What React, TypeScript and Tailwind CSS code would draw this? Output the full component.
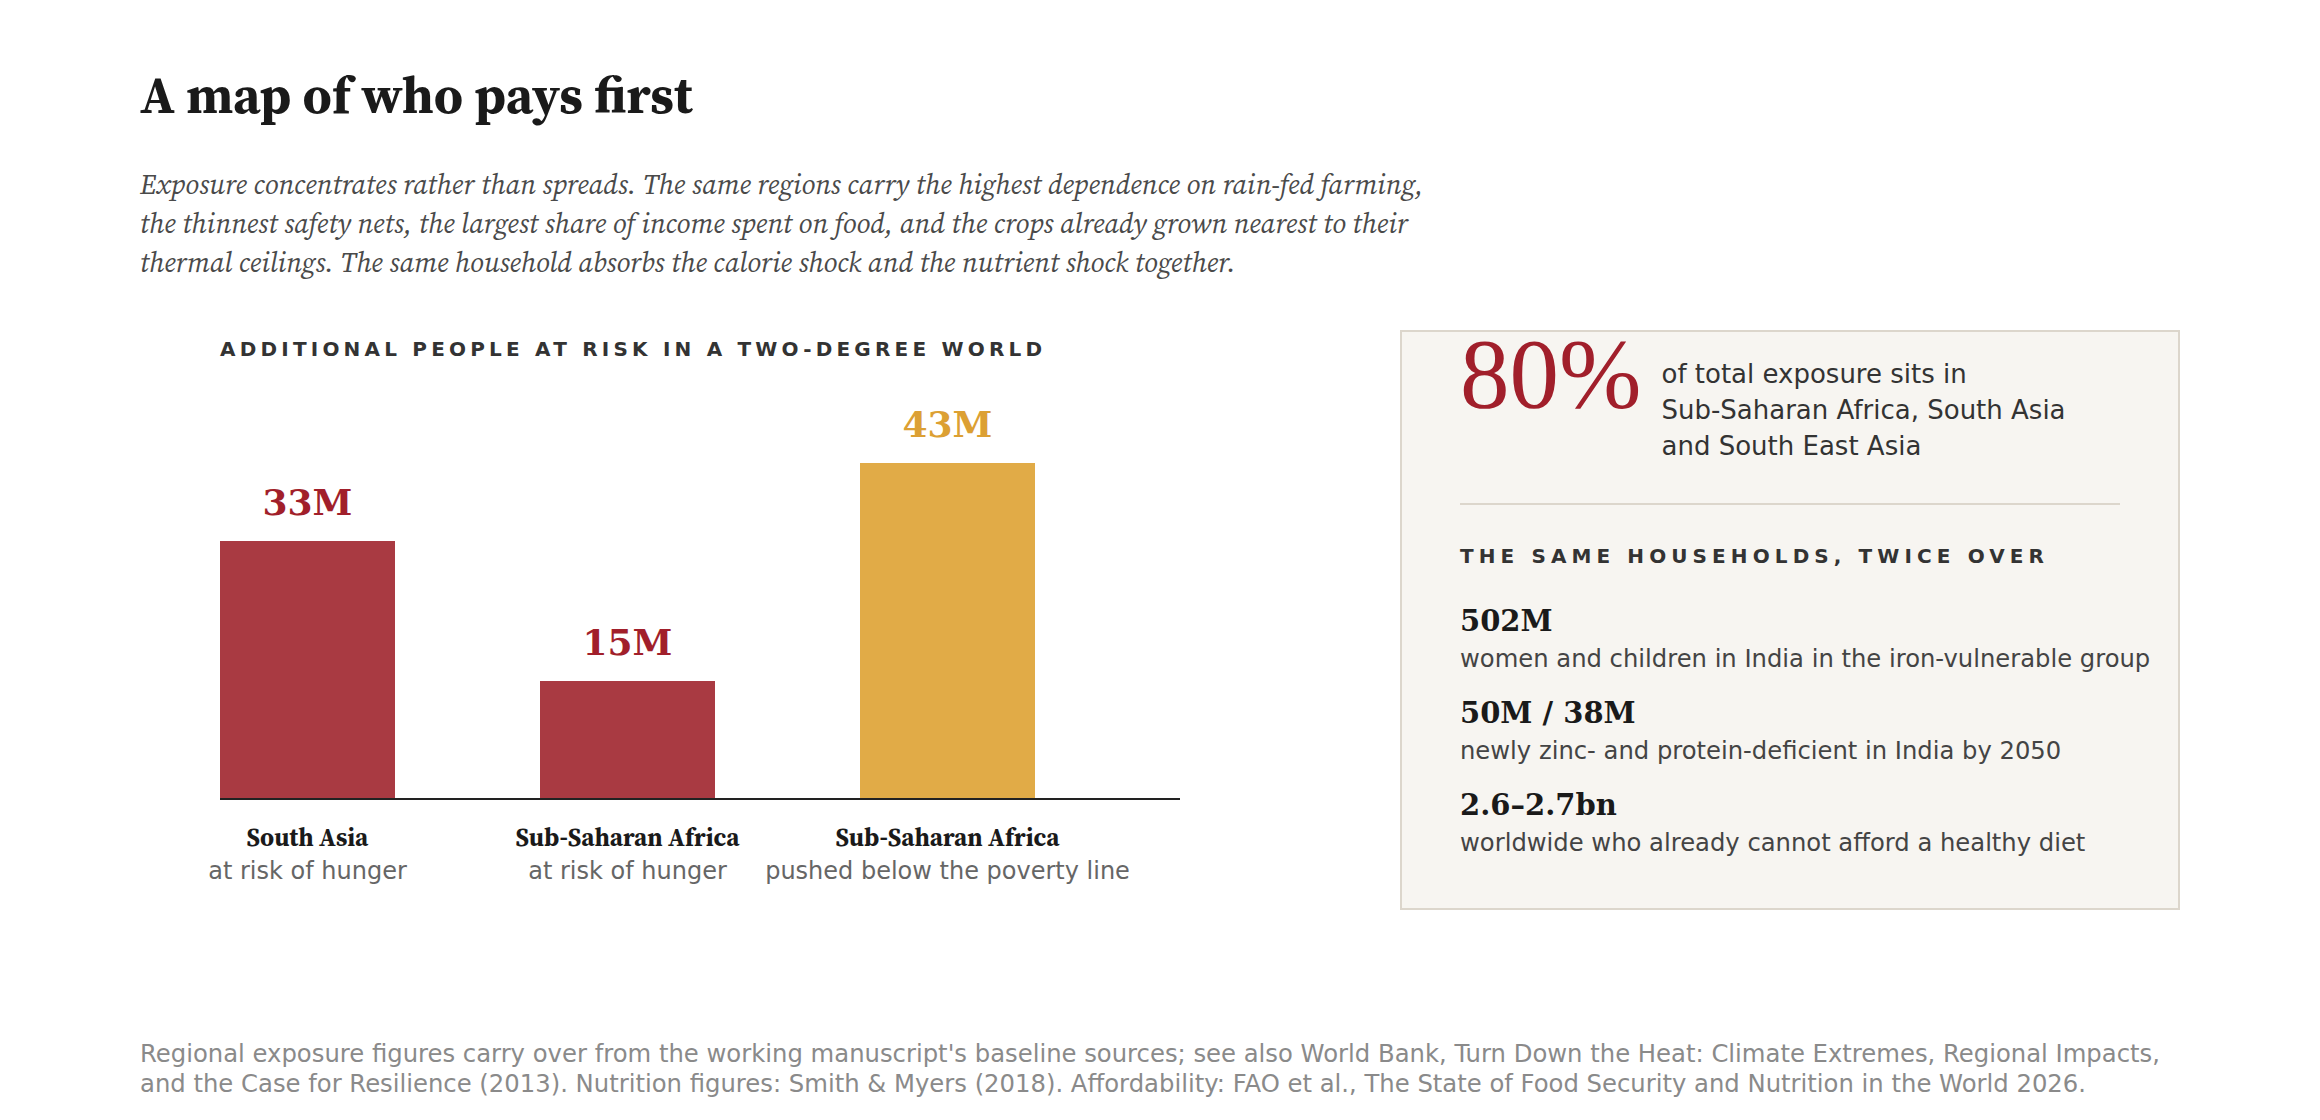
import React from "react";

const bars = [
  { value: "33M", h: 257, bar: "bg-[#a93a42]", text: "text-[#a11f2b]", name: "South Asia", sub: "at risk of hunger" },
  { value: "15M", h: 117, bar: "bg-[#a93a42]", text: "text-[#a11f2b]", name: "Sub-Saharan Africa", sub: "at risk of hunger" },
  { value: "43M", h: 335, bar: "bg-[#e1ab47]", text: "text-[#dca033]", name: "Sub-Saharan Africa", sub: "pushed below the poverty line" },
];

const stats = [
  { n: "502M", d: "women and children in India in the iron-vulnerable group" },
  { n: "50M / 38M", d: "newly zinc- and protein-deficient in India by 2050" },
  { n: "2.6–2.7bn", d: "worldwide who already cannot afford a healthy diet" },
];

export default function App() {
  return (
    <div className="w-[2320px] h-[1120px] bg-white px-[140px] pt-[65px] font-['DejaVu_Sans',sans-serif]">
      <h1 className="font-['Source_Serif_4',serif] text-[52px] leading-[60px] font-bold text-[#1a1a1a]">
        A map of who pays first
      </h1>
      <p className="font-['Source_Serif_4',serif] italic text-[28px] leading-[39px] text-[#4a4a4a] mt-[40px] max-w-[1300px]">
        Exposure concentrates rather than spreads. The same regions carry the highest dependence on rain-fed farming,
        the thinnest safety nets, the largest share of income spent on food, and the crops already grown nearest to
        their thermal ceilings. The same household absorbs the calorie shock and the nutrient shock together.
      </p>

      <div className="flex justify-between items-start mt-[48px]">
        {/* Chart */}
        <div className="w-[1040px] pl-[80px] pt-[8px]">
          <div className="text-[20px] leading-[22px] font-bold tracking-[0.21em] text-[#333]">
            ADDITIONAL PEOPLE AT RISK IN A TWO-DEGREE WORLD
          </div>
          <div className="w-[960px] h-[440px] border-b-2 border-[#222] flex items-end gap-[145px]">
            {bars.map((b, i) => (
              <div key={i} className="w-[175px] flex flex-col items-center">
                <div className={`font-['DejaVu_Serif',serif] font-bold text-[36px] leading-[46px] mb-[16px] ${b.text}`}>
                  {b.value}
                </div>
                <div className={`w-[175px] ${b.bar}`} style={{ height: b.h }} />
              </div>
            ))}
          </div>
          <div className="flex gap-[145px] mt-[21px]">
            {bars.map((b, i) => (
              <div key={i} className="w-[175px] flex flex-col items-center whitespace-nowrap">
                <div className="font-['Source_Serif_4',serif] font-bold text-[25px] leading-[32px] text-[#1a1a1a]">
                  {b.name}
                </div>
                <div className="text-[24px] leading-[32px] text-[#666] mt-[2px]">{b.sub}</div>
              </div>
            ))}
          </div>
        </div>

        {/* Side box */}
        <div className="w-[780px] h-[580px] border-2 border-[#dcd6cc] bg-[#f7f5f1] pl-[58px] pr-[28px] pt-[2px]">
          <div className="flex items-start gap-[20px]">
            <div className="font-['Liberation_Serif',serif] text-[99px] leading-[0.8] text-[#a11f2b]">80%</div>
            <div className="text-[26px] leading-[36px] text-[#333] mt-[22px] w-[440px]">
              of total exposure sits in
              <br />
              Sub-Saharan Africa, South Asia
              <br />
              and South East Asia
            </div>
          </div>
          <div className="h-[2px] w-[660px] bg-[#dcd6cc] mt-[39px]" />
          <div className="mt-[40px] text-[20px] leading-[22px] font-bold tracking-[0.255em] text-[#333]">
            THE SAME HOUSEHOLDS, TWICE OVER
          </div>
          <div className="flex flex-col gap-[20px] mt-[36px]">
            {stats.map((s) => (
              <div key={s.n}>
                <div className="font-['DejaVu_Serif',serif] font-bold text-[29px] leading-[36px] text-[#1a1a1a]">{s.n}</div>
                <div className="text-[24.25px] leading-[32px] text-[#444] mt-[4px] whitespace-nowrap">{s.d}</div>
              </div>
            ))}
          </div>
        </div>
      </div>

      <p className="mt-[129px] text-[24.3px] leading-[30px] text-[#8a8a8a]">
        Regional exposure figures carry over from the working manuscript's baseline sources; see also World Bank, Turn
        Down the Heat: Climate Extremes, Regional Impacts, and the Case for Resilience (2013). Nutrition figures: Smith
        &amp; Myers (2018). Affordability: FAO et al., The State of Food Security and Nutrition in the World 2026.
      </p>
    </div>
  );
}
